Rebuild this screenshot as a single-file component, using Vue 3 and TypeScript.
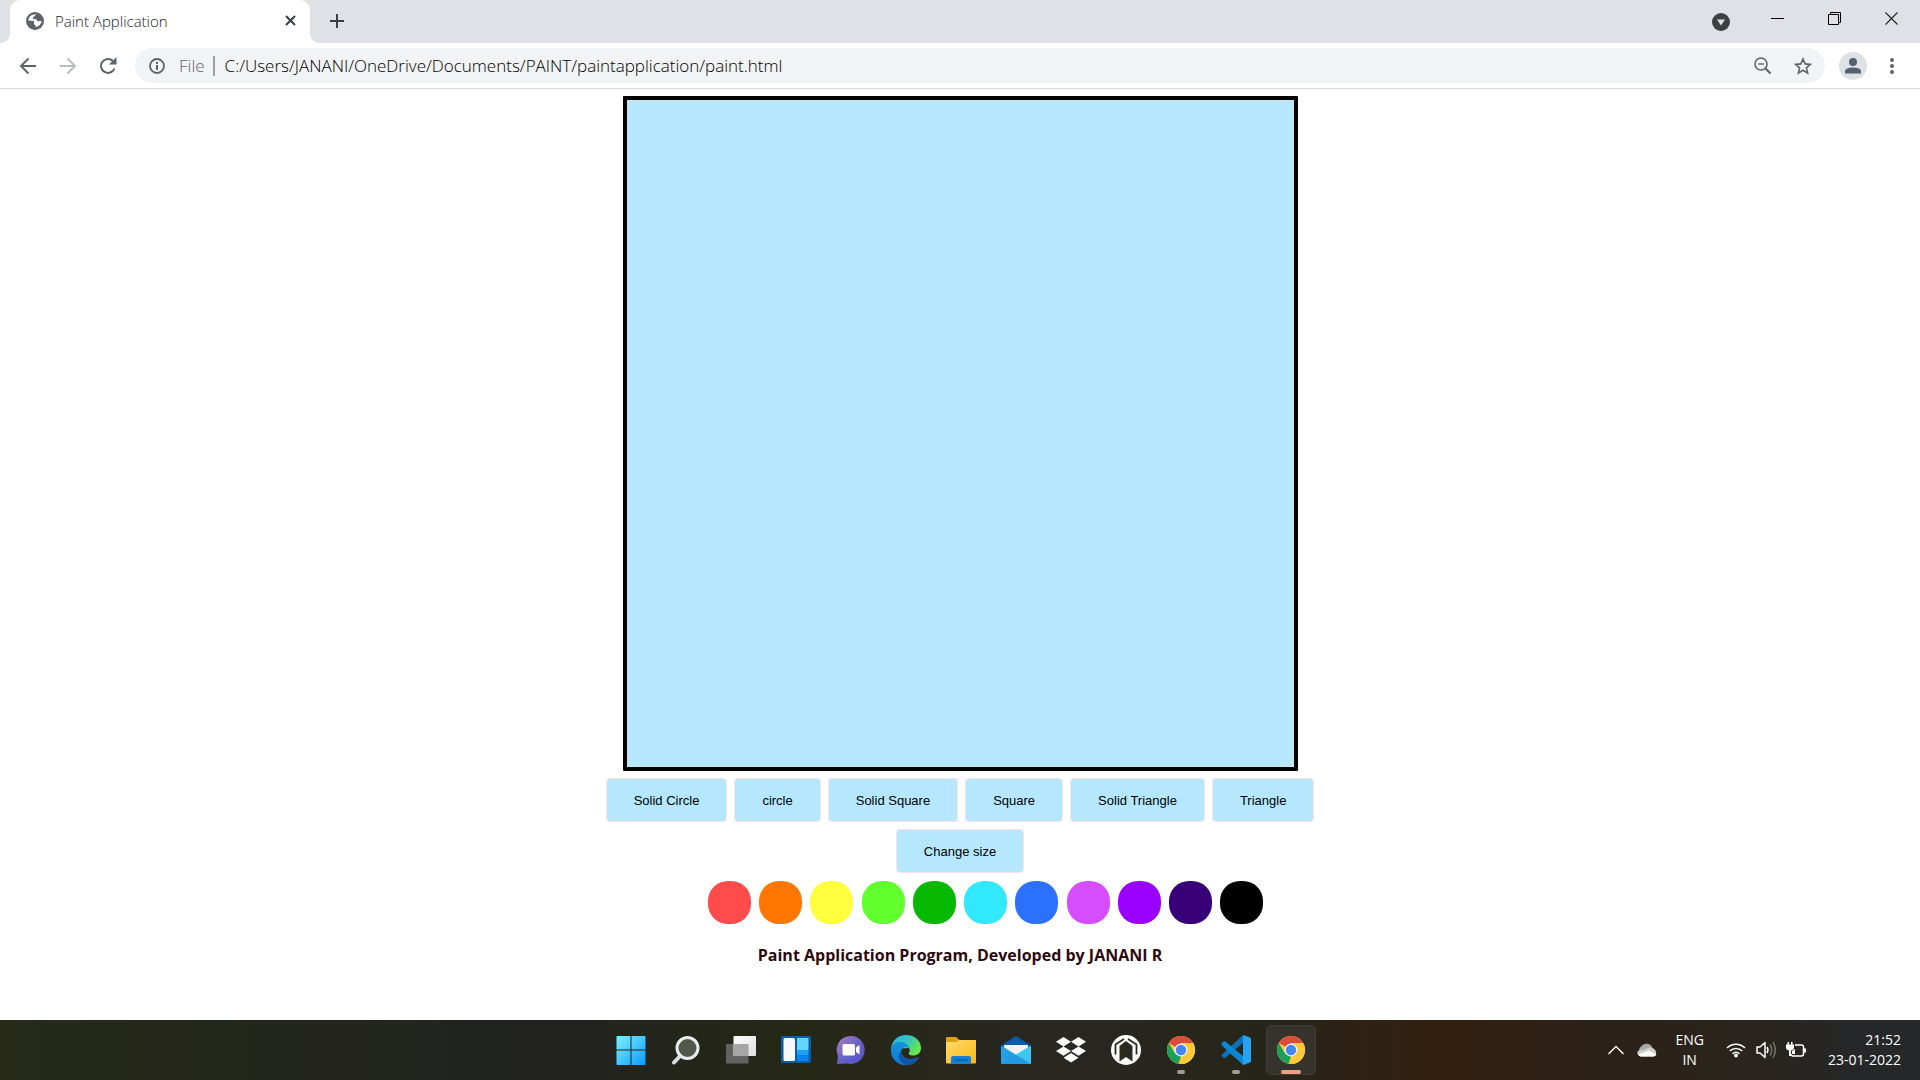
<script setup lang="ts">
import { onMounted, ref } from 'vue'

type Shape = 'solid-circle' | 'circle' | 'solid-square' | 'square' | 'solid-triangle' | 'triangle'

const shapes: { id: Shape; label: string }[] = [
  { id: 'solid-circle', label: 'Solid Circle' },
  { id: 'circle', label: 'circle' },
  { id: 'solid-square', label: 'Solid Square' },
  { id: 'square', label: 'Square' },
  { id: 'solid-triangle', label: 'Solid Triangle' },
  { id: 'triangle', label: 'Triangle' },
]

const colors = [
  { name: 'White', value: '#ffffff' },
  { name: 'Red', value: '#ff4b4b' },
  { name: 'Orange', value: '#ff7700' },
  { name: 'Yellow', value: '#ffff40' },
  { name: 'Lime', value: '#60ff2d' },
  { name: 'Green', value: '#06b900' },
  { name: 'Cyan', value: '#31e8ff' },
  { name: 'Blue', value: '#2b70ff' },
  { name: 'Pink', value: '#d54dff' },
  { name: 'Violet', value: '#9900ff' },
  { name: 'Indigo', value: '#370078' },
  { name: 'Black', value: '#000000' },
]

const address = ref('C:/Users/JANANI/OneDrive/Documents/PAINT/paintapplication/paint.html')
const shape = ref<Shape>('solid-circle')
const color = ref('#000000')
const size = ref(20)
const board = ref<HTMLCanvasElement | null>(null)
let ctx: CanvasRenderingContext2D | null = null

onMounted(() => {
  ctx = board.value?.getContext('2d') ?? null
})

function changeSize() {
  size.value = size.value >= 80 ? 20 : size.value + 20
}

function draw(e: MouseEvent) {
  if (!ctx || !board.value) return
  const ratio = board.value.width / board.value.clientWidth
  const x = e.offsetX * ratio
  const y = e.offsetY * ratio
  const r = size.value
  ctx.beginPath()
  if (shape.value.endsWith('circle')) ctx.arc(x, y, r, 0, Math.PI * 2)
  else if (shape.value.endsWith('square')) ctx.rect(x - r, y - r, r * 2, r * 2)
  else {
    ctx.moveTo(x, y - r)
    ctx.lineTo(x + r, y + r)
    ctx.lineTo(x - r, y + r)
    ctx.closePath()
  }
  ctx.fillStyle = ctx.strokeStyle = color.value
  if (shape.value.startsWith('solid')) ctx.fill()
  else ctx.stroke()
}
</script>

<template>
  <div class="desktop">
    <header class="tabs">
      <div class="tab">
        <svg class="favicon" viewBox="0 0 18 18" aria-hidden="true">
          <circle cx="9" cy="9" r="9" fill="#5f6368" />
          <path d="M10 2.2c-1 .8-.6 1.8-1.6 2.2-1.300.4-1.500 1-1.400 2 .8.8 2.600.2 3.600 1.200.6.9.3 1.800 1.600 1.700l3.500-.2c-.4 3-2.900 5.500-5.900 5.900l-.2-1.500c-.2-1-1.500-.6-1.600-1.800-.2-1.600.8-1.900-.3-2.600L2.300 8.400C2.600 5 5.500 2.100 10 2.200z" fill="#fff" />
          <path d="M11.500 2.800l2.600 2-1.200 1.600-2.200-.7z" fill="#5f6368" />
        </svg>
        <span class="tab-title">Paint Application</span>
        <button class="plain close" aria-label="Close tab">
          <svg width="11" height="11" viewBox="0 0 11 11"><path d="M1 1l9 9M10 1l-9 9" stroke="#3c4043" stroke-width="2" /></svg>
        </button>
      </div>
      <button class="plain new-tab" aria-label="New tab">
        <svg width="16" height="16" viewBox="0 0 16 16"><path d="M8 1v14M1 8h14" stroke="#3c4043" stroke-width="2" /></svg>
      </button>
      <div class="window-controls">
        <button class="plain search-tabs" aria-label="Search tabs">
          <svg width="18" height="18" viewBox="0 0 18 18"><circle cx="9" cy="9" r="9" fill="#3c4043" /><path d="M5 6.500h8l-4 6z" fill="#dee1e6" /></svg>
        </button>
        <button class="plain" aria-label="Minimize">
          <svg width="13" height="13" viewBox="0 0 13 13"><path d="M0 6.500h13" stroke="#000" /></svg>
        </button>
        <button class="plain" aria-label="Restore">
          <svg width="13" height="13" viewBox="0 0 13 13" fill="none" stroke="#000"><path d="M.5 2.500h10v10h-10zM2.500 2.500v-2h10v10h-2" /></svg>
        </button>
        <button class="plain" aria-label="Close window">
          <svg width="13" height="13" viewBox="0 0 13 13"><path d="M.5.5l12 12M12.500.5l-12 12" stroke="#222" stroke-width="1.100" /></svg>
        </button>
      </div>
    </header>

    <nav class="toolbar">
      <button class="plain tool" aria-label="Back">
        <svg width="18" height="18" viewBox="0 0 18 18" fill="none" stroke="#5f6368" stroke-width="2"><path d="M17 9H2.500M9.500 1.500L2 9l7.500 7.500" /></svg>
      </button>
      <button class="plain tool" aria-label="Forward">
        <svg width="18" height="18" viewBox="0 0 18 18" fill="none" stroke="#babcbe" stroke-width="2"><path d="M1 9h14.500M8.500 1.500L16 9l-7.500 7.500" /></svg>
      </button>
      <button class="plain tool" aria-label="Reload">
        <svg width="18" height="18" viewBox="0 0 18 18"><path d="M15.500 11.500A7 7 0 1 1 14 4" fill="none" stroke="#5f6368" stroke-width="2" /><path d="M17.500 0v7.500H10z" fill="#5f6368" /></svg>
      </button>
      <div class="omnibox">
        <svg width="16" height="16" viewBox="0 0 16 16" aria-hidden="true"><circle cx="8" cy="8" r="7" fill="none" stroke="#5f6368" stroke-width="1.800" /><path d="M7 7h2v5H7zM7 4h2v2H7z" fill="#5f6368" /></svg>
        <label class="scheme" for="address">File</label>
        <input id="address" v-model="address" class="address" type="text" spellcheck="false" />
        <button class="plain" aria-label="Zoom">
          <svg width="18" height="18" viewBox="0 0 18 18" fill="none" stroke="#5f6368"><circle cx="7" cy="7" r="6" stroke-width="1.600" /><path d="M4 7h6" stroke-width="1.400" /><path d="M11.500 11.500l5 5" stroke-width="2.200" /></svg>
        </button>
        <button class="plain" aria-label="Bookmark this page">
          <svg width="18" height="18" viewBox="0 0 18 18"><path d="M9 2l2.100 4.900 5.300.5-4 3.500 1.200 5.200L9 13.300l-4.600 2.800 1.200-5.200-4-3.500 5.300-.5z" fill="none" stroke="#5f6368" stroke-width="1.600" /></svg>
        </button>
      </div>
      <button class="plain avatar" aria-label="Profile">
        <svg width="28" height="28" viewBox="0 0 28 28"><circle cx="14" cy="14" r="14" fill="#dee1e6" /><circle cx="14" cy="10" r="4" fill="#52606f" /><path d="M6 21.500v-2c0-3 4-4 8-4s8 1 8 4v2z" fill="#52606f" /></svg>
      </button>
      <button class="plain menu" aria-label="Menu">
        <svg width="4" height="16" viewBox="0 0 4 16" fill="#5f6368"><circle cx="2" cy="2" r="2" /><circle cx="2" cy="8" r="2" /><circle cx="2" cy="14" r="2" /></svg>
      </button>
    </nav>

    <main class="page">
      <canvas ref="board" class="board" width="667" height="667" @click="draw"></canvas>
      <div class="row">
        <button v-for="s in shapes" :key="s.id" class="action" @click="shape = s.id">{{ s.label }}</button>
      </div>
      <div class="row">
        <button class="action" @click="changeSize">Change size</button>
      </div>
      <div class="palette">
        <button
          v-for="c in colors"
          :key="c.name"
          class="swatch"
          :aria-label="c.name"
          :style="{ backgroundColor: c.value }"
          @click="color = c.value"
        ></button>
      </div>
      <h4 class="credit">Paint Application Program, Developed by JANANI R</h4>
    </main>

    <footer class="taskbar">
      <div class="apps">
        <button class="plain app" aria-label="Start">
          <svg viewBox="0 0 30 30"><defs><linearGradient id="win" x1="0" y1="0" x2="30" y2="30" gradientUnits="userSpaceOnUse"><stop stop-color="#7ff5ff" /><stop offset="1" stop-color="#0b98ff" /></linearGradient></defs><path d="M1.500 1H14.500v13.500H.5V2a1 1 0 0 1 1-1zM15.500 1h13a1 1 0 0 1 1 1v12.500h-14zM.5 15.500h14V30h-13a1 1 0 0 1-1-1zM15.500 15.500h14V29a1 1 0 0 1-1 1h-13z" fill="url(#win)" /></svg>
        </button>
        <button class="plain app" aria-label="Search">
          <svg viewBox="0 0 30 30"><path d="M10 20l-7 7.500" stroke="#d8dce0" stroke-width="4" stroke-linecap="round" /><circle cx="16.500" cy="13" r="10.500" fill="#55564a" stroke="#e9edf0" stroke-width="3" /></svg>
        </button>
        <button class="plain app" aria-label="Task view">
          <svg viewBox="0 0 30 30"><defs><linearGradient id="tv" x1="0" y1="0" x2="1" y2="1"><stop stop-color="#fff" /><stop offset="1" stop-color="#ddd" /></linearGradient></defs><rect x="0" y="9" width="22.500" height="19.500" rx="1" fill="#626262" /><rect x="7.500" y="1" width="22.500" height="20" rx="1" fill="url(#tv)" /><path d="M7.500 9h15v12h-15z" fill="#a6a6a6" /></svg>
        </button>
        <button class="plain app" aria-label="Widgets">
          <svg viewBox="0 0 30 30"><rect y="1" width="30" height="27" rx="1" fill="#075da8" /><rect x="2.500" y="3" width="11.500" height="23" rx="1.500" fill="#f5f7fa" /><path d="M16 3h11.500v12.500H16z" fill="#63d5ff" /><path d="M16 16h11.500v4.500H16z" fill="#189fff" /><path d="M16 21h11.500v5H16z" fill="#0a84ee" /></svg>
        </button>
        <button class="plain app" aria-label="Chat">
          <svg viewBox="0 0 30 30"><defs><linearGradient id="chat" x1="0" y1="0" x2="1" y2="1"><stop stop-color="#b07fc0" /><stop offset=".5" stop-color="#6a62c8" /><stop offset="1" stop-color="#4a50c4" /></linearGradient></defs><path d="M15 1a14 14 0 1 1-4 27.500L1 29l1-8A14 14 0 0 1 15 1z" fill="url(#chat)" /><rect x="6.500" y="9" width="12.500" height="11.500" rx="1.500" fill="#fff" /><path d="M20 12.500l3.500-2.500v9.500L20 17z" fill="#fff" /></svg>
        </button>
        <button class="plain app" aria-label="Edge">
          <svg viewBox="0 0 30 30">
            <defs>
              <linearGradient id="e1" x1="0" y1="0" x2="1" y2=".5"><stop stop-color="#2fb5e6" /><stop offset=".5" stop-color="#30c2c8" /><stop offset="1" stop-color="#68e84a" /></linearGradient>
              <linearGradient id="e2" x1="0" y1="0" x2="0" y2="1"><stop stop-color="#1793d8" /><stop offset="1" stop-color="#0a78d4" /></linearGradient>
            </defs>
            <path d="M0 14C1 5 7 0 15 0c9 0 15 6 15 13 0 5-3.500 7.500-8 7.500-3 0-5-1-4-3 1-1.500 1-3 0-4.500z" fill="url(#e1)" />
            <path d="M0 14C1 8 6 6.500 10 7c5 .5 8.500 4 8.500 7-2-3-7-2.500-8 1-2 6 4 10 11 9l6.500-1.500C25 27.500 20.500 30 15 30 6 30-1 23 0 14z" fill="url(#e2)" />
            <path d="M10 16c0 5 5 8 10 8 3 0 5-1 7-2 .8-.3 1.200.3.800 1C25 27.500 21 30 16 30c-7-1-11-9-6-14z" fill="#1255a4" />
          </svg>
        </button>
        <button class="plain app" aria-label="File Explorer">
          <svg viewBox="0 0 30 30"><defs><linearGradient id="fold" x1="0" y1="0" x2="1" y2="1"><stop stop-color="#ffdc70" /><stop offset="1" stop-color="#fbb80e" /></linearGradient></defs><path d="M0 12V3a1 1 0 0 1 1-1h9c1.500 0 2 3 4 3h15a1 1 0 0 1 1 1v6z" fill="#e2a00c" /><path d="M0 7h10c2 0 2-2 4-2h15a1 1 0 0 1 1 1v21.500a1 1 0 0 1-1 1H1a1 1 0 0 1-1-1z" fill="url(#fold)" /><path d="M5 28.500V23a2 2 0 0 1 2-2h16a2 2 0 0 1 2 2v5.500z" fill="#1280d8" /><path d="M8.500 25h13" stroke="#0a5296" stroke-width="1.200" /></svg>
        </button>
        <button class="plain app" aria-label="Mail">
          <svg viewBox="0 0 30 30"><path d="M0 10.500L15 1l15 9.500V20H0z" fill="#0a5cad" /><path d="M3 10h24v9L15 25 3 19z" fill="#f1f3f5" /><path d="M0 10.500L30 29H1a1 1 0 0 1-1-1z" fill="#23a0e8" /><path d="M30 10.500V28a1 1 0 0 1-1 1L15 19.500z" fill="#3cc6f2" /><path d="M1 29l14-9.500L29 29z" fill="#2299e2" /></svg>
        </button>
        <button class="plain app" aria-label="Dropbox">
          <svg viewBox="0 0 30 30" fill="#fff"><path d="M7.500 2l7.500 4.700-7.500 4.700L0 6.700zM22.500 2L30 6.700l-7.500 4.700L15 6.700zM7.500 11.400l7.500 4.700-7.500 4.700L0 16.100zM22.500 11.400l7.500 4.700-7.500 4.700-7.500-4.700zM15 18l7.500 4.700-7.500 4.800-7.500-4.800z" /></svg>
        </button>
        <button class="plain app" aria-label="Home">
          <svg viewBox="0 0 30 30"><circle cx="15" cy="15" r="15" fill="#fff" /><path d="M8.500 26.500V11L15 6l6.500 5v15.500L15 22z" fill="#2a2920" /><path d="M13 4L4.500 9.500v10M17 4l8.500 5.500v10" fill="none" stroke="#2a2920" stroke-width="1.800" /></svg>
        </button>
        <button class="plain app running" aria-label="Chrome">
          <svg viewBox="0 0 30 30"><circle cx="15" cy="15" r="14" fill="#fdc93a" /><path d="M15 15L2.900 8A14 14 0 0 1 27.100 8H15z" fill="#dd4b3e" /><path d="M2.900 8L9 18.500 15 21.500l-2.500 7.300A14 14 0 0 1 2.900 8z" fill="#1c9f58" /><path d="M15 8h12.100A14 14 0 0 1 14 29l6.500-10.500z" fill="#fdc93a" /><circle cx="15" cy="15" r="6.500" fill="#f1f3f4" /><circle cx="15" cy="15" r="5.200" fill="#4486f4" /></svg>
        </button>
        <button class="plain app running" aria-label="Visual Studio Code">
          <svg viewBox="0 0 30 30"><path d="M22 0v8L4 23c-1 .6-4-1.600-3.500-3z" fill="#0b70b8" /><path d="M.5 8.500C1 7 3.500 5.800 4.500 6.500L22 21v9C17 25 4 14 .5 10z" fill="#0b86d1" /><path d="M22 0l7 2.500c.6.3 1 1 1 1.500v22c0 .7-.4 1.200-1 1.500L22 30z" fill="#26a4f2" /></svg>
        </button>
        <button class="plain app running active" aria-label="Paint Application, Chrome">
          <svg viewBox="0 0 30 30"><circle cx="15" cy="15" r="14" fill="#fdc93a" /><path d="M15 15L2.900 8A14 14 0 0 1 27.100 8H15z" fill="#dd4b3e" /><path d="M2.900 8L9 18.500 15 21.500l-2.500 7.300A14 14 0 0 1 2.900 8z" fill="#1c9f58" /><path d="M15 8h12.100A14 14 0 0 1 14 29l6.500-10.500z" fill="#fdc93a" /><circle cx="15" cy="15" r="6.500" fill="#f1f3f4" /><circle cx="15" cy="15" r="5.200" fill="#4486f4" /></svg>
        </button>
      </div>
      <div class="tray">
        <button class="plain" aria-label="Show hidden icons">
          <svg width="18" height="10" viewBox="0 0 18 10"><path d="M1.500 9L9 1.500 16.500 9" fill="none" stroke="#fff" stroke-width="1.400" /></svg>
        </button>
        <button class="plain" aria-label="OneDrive">
          <svg width="20" height="14" viewBox="0 0 20 14"><path d="M5 12a5 5 0 0 1-1-8.500A6.500 6.500 0 0 1 15.500 5 4.500 4.500 0 0 1 17 13z" fill="#aaa7a3" /><path d="M4 13.500a4 4 0 0 1-3.500-5c2-1.500 4-2 6-1.500L12 4.500c2 0 3.500.5 4.500 1.500a4 4 0 0 1 0 7.500z" fill="#cfcdca" /><path d="M4 13.500a4 4 0 0 1-3-2L12 7.500l7.500 4a4 4 0 0 1-3 2z" fill="#fff" /></svg>
        </button>
        <button class="plain lang" aria-label="Language ENG IN"><span>ENG</span><span>IN</span></button>
        <button class="plain status" aria-label="Network, volume and battery">
          <svg width="20" height="16" viewBox="0 0 20 16" fill="none" stroke="#fff" stroke-width="1.500"><path d="M1 6a12.500 12.500 0 0 1 18 0M3.800 9a8.700 8.700 0 0 1 12.400 0M6.500 11.800a5 5 0 0 1 7 0" /><circle cx="10" cy="13.500" r="1.200" fill="#fff" /></svg>
          <svg width="20" height="18" viewBox="0 0 20 18" fill="none" stroke="#fff" stroke-width="1.500"><path d="M1 6h3l5-4.500v15L4 12H1z" stroke-linejoin="round" /><path d="M11 6q2 3 0 6" /><path d="M14 3.500q3.500 5.500 0 11M17 1q4.500 8 0 16" stroke="#77736d" /></svg>
          <svg width="20" height="16" viewBox="0 0 20 16"><path d="M9 3h6.500a2 2 0 0 1 2 2v7a2 2 0 0 1-2 2H7a2 2 0 0 1-2-2" fill="none" stroke="#fff" stroke-width="1.500" /><path d="M18 6.500h2v4h-2zM0 2.500h8V5q0 3-3 3.500V14H3V8.500Q0 8 0 5zM1.500 0H3v3H1.500zM5 0h1.500v3H5zM6 9l3-2v5H6z" fill="#fff" /></svg>
        </button>
        <button class="plain clock" aria-label="Clock 21:52, 23-01-2022"><span>21:52</span><span>23-01-2022</span></button>
      </div>
    </footer>
  </div>
</template>

<style>
body {
  margin: 0;
}
</style>

<style scoped>
.desktop {
  display: flex;
  flex-direction: column;
  min-height: 100vh;
  background: #fff;
  font-family: 'Open Sans', 'Noto Sans', sans-serif;
}
.desktop * {
  box-sizing: border-box;
}
.plain {
  display: flex;
  align-items: center;
  justify-content: center;
  margin: 0;
  padding: 0;
  border: 0;
  background: none;
  font-family: inherit;
  color: inherit;
}
svg {
  display: block;
  flex: none;
}

.tabs {
  display: flex;
  height: 43px;
  padding-left: 10px;
  background: #dee1e6;
}
.tab {
  position: relative;
  display: flex;
  align-items: center;
  gap: 11px;
  width: 300px;
  padding: 0 14px 2px 16px;
  border-radius: 10px 10px 0 0;
  background: #fff;
}
.tab::before,
.tab::after {
  content: '';
  position: absolute;
  bottom: 0;
  width: 10px;
  height: 10px;
}
.tab::before {
  right: 100%;
  background: radial-gradient(circle at 0 0, #dee1e6 10px, #fff 10px);
}
.tab::after {
  left: 100%;
  background: radial-gradient(circle at 100% 0, #dee1e6 10px, #fff 10px);
}
.favicon {
  width: 18px;
  height: 18px;
}
.tab-title {
  flex: 1;
  font-size: 15px;
  font-weight: 300;
  line-height: 20px;
  color: #202124;
}
.new-tab {
  width: 54px;
  padding-bottom: 1px;
}
.window-controls {
  display: flex;
  height: 37px;
  margin-left: auto;
}
.window-controls .plain {
  width: 57px;
}
.window-controls .search-tabs {
  padding-top: 6px;
}

.toolbar {
  display: flex;
  align-items: center;
  height: 46px;
  padding: 0 14px 0 8px;
  border-bottom: 1px solid #d8dade;
}
.tool {
  width: 40px;
  height: 35px;
}
.omnibox {
  display: flex;
  flex: 1;
  align-items: center;
  height: 35px;
  margin-left: 7px;
  padding: 0 13px 0 14px;
  border-radius: 18px;
  background: #f1f3f4;
}
.omnibox .plain {
  width: 18px;
  margin-left: 22px;
}
.scheme {
  margin-left: 14px;
  padding-right: 8px;
  border-right: 2px solid #9aa0a6;
  font-size: 17px;
  font-weight: 300;
  line-height: 20px;
  color: #5f6368;
}
.address {
  flex: 1;
  min-width: 0;
  margin-left: 10px;
  padding: 0;
  border: 0;
  outline: 0;
  background: none;
  font-family: inherit;
  font-size: 17px;
  font-weight: 300;
  line-height: 24px;
  color: #000;
}
.avatar {
  margin-left: 14px;
}
.menu {
  width: 28px;
  margin-left: 11px;
}

.page {
  display: flex;
  flex: 1;
  flex-direction: column;
  align-items: center;
  gap: 7px;
  padding: 7px 8px 0;
}
.board {
  width: 675px;
  max-width: 100%;
  border: 4px solid #000;
  border-radius: 1px;
  background: #b5e8ff;
  box-shadow: inset 0 0 3px #d6e6c8;
}
.row {
  display: flex;
  flex-wrap: wrap;
  justify-content: center;
  gap: 7px;
}
.action {
  height: 44px;
  margin: 0;
  padding: 0 27px;
  border: 1px solid #ffe1e8;
  border-radius: 4px;
  background: #b5e8ff;
  font-family: 'Liberation Sans', Arial, sans-serif;
  font-size: 13px;
  color: #000;
}
.palette {
  display: flex;
  justify-content: space-between;
  width: 607px;
  max-width: 100%;
  padding-top: 1px;
}
.swatch {
  width: 43px;
  height: 43px;
  padding: 0;
  border: 0;
  border-radius: 20px;
}
.credit {
  margin: 12px 0 24px;
  font-size: 16px;
  font-weight: 700;
  line-height: 24px;
  color: #2d0a0f;
}

.taskbar {
  display: grid;
  grid-template-columns: 1fr auto 1fr;
  align-items: center;
  height: 60px;
  background: linear-gradient(90deg, #262a17 0%, #22241e 20%, #22231f 30%, #262816 42%, #292722 55%, #262519 66%, #34200f 75%, #2b2118 84%, #29251e 92%, #252729 97%);
  color: #fff;
}
.apps {
  display: flex;
  grid-column: 2;
  gap: 5px;
  padding-left: 2px;
}
.app {
  position: relative;
  width: 50px;
  height: 50px;
  border: 1px solid transparent;
  border-radius: 5px;
}
.app svg {
  width: 30px;
  height: 30px;
}
.active {
  border-color: #403e36;
  background: #36332c;
}
.running::after {
  content: '';
  position: absolute;
  bottom: 0;
  left: 50%;
  width: 8px;
  height: 4px;
  border-radius: 2px;
  background: #9d9c98;
  transform: translateX(-50%);
}
.active::after {
  width: 20px;
  background: #eda083;
}
.tray {
  display: flex;
  align-items: center;
  justify-content: flex-end;
  gap: 18px;
  padding-right: 19px;
}
.tray > .plain:first-child {
  margin-right: -6px;
}
.status {
  gap: 10px;
  margin: 0 4px;
}
.lang,
.clock {
  flex-direction: column;
  font-size: 14px;
  line-height: 20px;
}
.clock {
  align-items: flex-end;
}
</style>
